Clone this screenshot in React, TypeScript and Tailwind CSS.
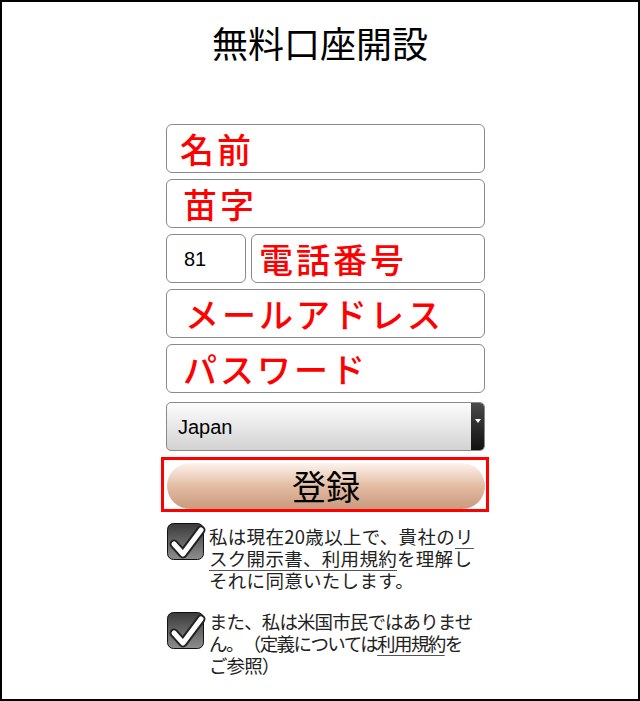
import React from "react";

const jp = "font-['Noto_Sans_CJK_JP',sans-serif]";

function Field({ label, pl = "pl-[13px]", className = "" }: { label: string; pl?: string; className?: string }) {
  return (
    <div
      className={`h-[49px] border border-[#8a8a8a] rounded-[6px] bg-white flex items-center ${pl} ${className}`}
    >
      <span className={`${jp} text-[34px] leading-none font-medium text-[#ff0000] tracking-[3px]`}>{label}</span>
    </div>
  );
}

function Check() {
  return (
    <svg width="38" height="38" viewBox="0 0 38 38" className="overflow-visible shrink-0">
      <defs>
        <linearGradient id="cbg" x1="0" y1="0" x2="0" y2="1">
          <stop offset="0" stopColor="#3a3a3a" />
          <stop offset="1" stopColor="#8e8e8e" />
        </linearGradient>
      </defs>
      <rect x="0.5" y="0.5" width="36" height="36" rx="6" fill="url(#cbg)" stroke="#111" />
      <path d="M7 21 L16 31 L34 7" stroke="#222" strokeWidth="9" fill="none" strokeLinecap="round" strokeLinejoin="round" />
      <path d="M7 21 L16 31 L34 7" stroke="#fff" strokeWidth="5" fill="none" strokeLinecap="round" strokeLinejoin="round" />
    </svg>
  );
}

const ul = "underline decoration-[#555] decoration-1 underline-offset-[4px]";

export default function App() {
  return (
    <div className="w-[640px] h-[701px] border-2 border-black bg-white overflow-hidden">
      <h1 className={`${jp} text-center text-[36px] leading-[36px] font-normal text-black mt-[22px]`}>
        無料口座開設
      </h1>
      <div className="ml-[164px] w-[319px] mt-[64px] flex flex-col">
        <Field label="名前" />
        <Field label="苗字" className="mt-[6px]" pl="pl-[16px]" />
        <div className="mt-[6px] flex gap-[5px]">
          <div className="w-[80px] h-[49px] border border-[#8a8a8a] rounded-[6px] flex items-center pl-[17px]">
            <span className="font-['Liberation_Sans',sans-serif] text-[20px] text-black">81</span>
          </div>
          <Field label="電話番号" className="flex-1" pl="pl-[7px]" />
        </div>
        <Field label="メールアドレス" className="mt-[6px]" pl="pl-[18px]" />
        <Field label="パスワード" className="mt-[6px]" pl="pl-[16px]" />
        <div className="mt-[9px] h-[49px] border border-[#8a8a8a] rounded-[5px] bg-linear-to-b from-[#fdfdfd] to-[#d2d2d2] flex items-stretch overflow-hidden">
          <div className="flex-1 flex items-center pl-[11px]">
            <span className="font-['Liberation_Sans',sans-serif] text-[20px] text-black">Japan</span>
          </div>
          <div className="w-[13px] bg-linear-to-b from-[#4a4a4a] to-[#111] rounded-r-[4px] flex justify-center pt-[16px]">
            <div className="w-0 h-0 border-l-[3px] border-r-[3px] border-t-[4px] border-l-transparent border-r-transparent border-t-white" />
          </div>
        </div>
        <div className="mt-[6px] ml-[-5px] w-[328px] h-[55px] border-[3px] border-[#ff0000] pt-[3px] pl-[3px]">
          <div className="w-[318px] h-[46px] rounded-full bg-linear-to-b from-[#fdf4ee] via-[#e3bca3] via-50% to-[#c99a7e] flex items-center justify-center">
            <span className={`${jp} text-[34px] leading-none text-black`}>登録</span>
          </div>
        </div>

        <div className={`${jp} text-[18.5px] leading-[22px] text-[#222] [text-spacing-trim:space-all]`}>
          <div className="mt-[11px] flex items-start ml-[1px]">
            <Check />
            <div className="ml-[4px] mt-[2px] whitespace-nowrap">
              <div className="tracking-[0.3px]">
                私は現在20歳以上で、貴社の<span className={ul}>リ</span>
              </div>
              <div className="tracking-[0.3px]">
                <span className={ul}>スク開示書、利用規約</span>を理解し
              </div>
              <div className="tracking-[0.3px]">それに同意いたします。</div>
            </div>
          </div>
          <div className="mt-[19px] flex items-start ml-[1px]">
            <div className="mt-[2px]">
              <Check />
            </div>
            <div className="ml-[4px] whitespace-nowrap">
              <div className="tracking-[-0.9px]">また、私は米国市民ではありませ</div>
              <div className="tracking-[-1.6px]">
                ん。（定義については<span className={ul}>利用規約</span>を
              </div>
              <div className="tracking-[-0.9px]">ご参照）</div>
            </div>
          </div>
        </div>
      </div>
    </div>
  );
}
